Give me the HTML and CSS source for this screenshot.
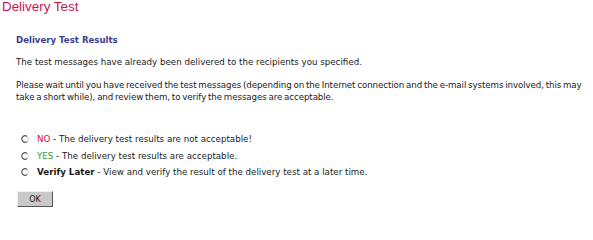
FILE: index.html
```html
<!DOCTYPE html>
<html>
<head>
<meta charset="utf-8">
<link rel="stylesheet" href="styles.css">
</head>
<body>
<h1 class="title">Delivery Test</h1>
<div class="content">
  <h2 class="heading">Delivery Test Results</h2>
  <p class="para p1">The test messages have already been delivered to the recipients you specified.</p>
  <p class="para p2">Please wait until you have received the test messages (depending on the Internet connection and the e-mail systems involved, this may take a short while), and review them, to verify the messages are acceptable.</p>
  <div class="options">
    <label class="option">
      <svg class="radio" width="8" height="8" viewBox="0 0 8 8"><circle cx="4" cy="4" r="3.2" fill="#fff"/><path d="M6.3 1.7 A3.2 3.2 0 1 0 6.3 6.3" fill="none" stroke="#555" stroke-width="1.1"/><path d="M6.3 1.7 A3.2 3.2 0 0 1 6.3 6.3" fill="none" stroke="#ccc" stroke-width="1"/></svg>
      <span class="opt-text"><span class="no">NO</span> - The delivery test results are not acceptable!</span>
    </label>
    <label class="option">
      <svg class="radio" width="8" height="8" viewBox="0 0 8 8"><circle cx="4" cy="4" r="3.2" fill="#fff"/><path d="M6.3 1.7 A3.2 3.2 0 1 0 6.3 6.3" fill="none" stroke="#555" stroke-width="1.1"/><path d="M6.3 1.7 A3.2 3.2 0 0 1 6.3 6.3" fill="none" stroke="#ccc" stroke-width="1"/></svg>
      <span class="opt-text"><span class="yes">YES</span> - The delivery test results are acceptable.</span>
    </label>
    <label class="option">
      <svg class="radio" width="8" height="8" viewBox="0 0 8 8"><circle cx="4" cy="4" r="3.2" fill="#fff"/><path d="M6.3 1.7 A3.2 3.2 0 1 0 6.3 6.3" fill="none" stroke="#555" stroke-width="1.1"/><path d="M6.3 1.7 A3.2 3.2 0 0 1 6.3 6.3" fill="none" stroke="#ccc" stroke-width="1"/></svg>
      <span class="opt-text"><b>Verify Later</b> - View and verify the result of the delivery test at a later time.</span>
    </label>
  </div>
  <button class="ok" type="button">OK</button>
</div>
</body>
</html>
```
FILE: styles.css
```css
html, body {
  margin: 0;
  padding: 0;
  background: #fff;
}
body {
  font-family: "DejaVu Sans", Verdana, sans-serif;
  font-size: 8.7px;
  line-height: 12px;
  color: #1a1a1a;
}
.title {
  margin: 0;
  padding-left: 2px;
  font-family: "Liberation Sans", Arial, sans-serif;
  font-weight: normal;
  font-size: 13.4px;
  line-height: 14px;
  color: #c8174f;
}
.content {
  padding-left: 16px;
}
.heading {
  margin: 20px 0 0;
  font-size: 8.6px;
  line-height: 12px;
  font-weight: bold;
  color: #3d3d8f;
}
.para {
  margin: 0;
}
.p1 { margin-top: 10px; }
.p2 {
  margin-top: 11px;
  letter-spacing: -0.1px;
  word-spacing: -0.8px;
}
.options {
  margin-top: 30px;
  display: flex;
  flex-direction: column;
  gap: 4.5px;
}
.option {
  display: flex;
  align-items: center;
  padding-left: 5px;
}
.radio {
  display: block;
  width: 8px;
  height: 8px;
  margin-right: 8px;
}
.opt-text b { font-weight: bold; }
.no { color: #d0103a; }
.yes { color: #2e9b2e; }
.ok {
  display: block;
  margin-top: 13px;
  margin-left: 1px;
  width: 36px;
  height: 16px;
  padding: 0;
  font-family: "DejaVu Sans", Verdana, sans-serif;
  font-size: 8px;
  color: #222;
  background: #c9c9c9;
  border: 1px solid;
  border-color: #f0f0f0 #555 #555 #f0f0f0;
}
```
